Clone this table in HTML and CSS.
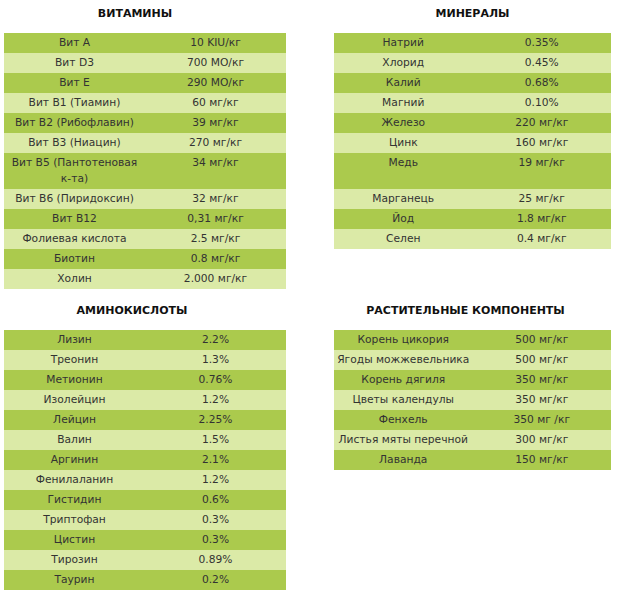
FILE: index.html
```html
<!DOCTYPE html>
<html lang="ru">
<head>
<meta charset="utf-8">
<title>Состав</title>
<link rel="stylesheet" href="styles.css">
</head>
<body>
<div class="grid">
  <section class="sec">
    <h2 class="title t-vit">ВИТАМИНЫ</h2>
    <table class="tbl">
      <tr><td>Вит A</td><td>10 KIU/кг</td></tr>
      <tr><td>Вит D3</td><td>700 МО/кг</td></tr>
      <tr><td>Вит E</td><td>290 МО/кг</td></tr>
      <tr><td>Вит B1 (Тиамин)</td><td>60 мг/кг</td></tr>
      <tr><td>Вит B2 (Рибофлавин)</td><td>39 мг/кг</td></tr>
      <tr><td>Вит B3 (Ниацин)</td><td>270 мг/кг</td></tr>
      <tr><td>Вит B5 (Пантотеновая к-та)</td><td>34 мг/кг</td></tr>
      <tr><td>Вит B6 (Пиридоксин)</td><td>32 мг/кг</td></tr>
      <tr><td>Вит B12</td><td>0,31 мг/кг</td></tr>
      <tr><td>Фолиевая кислота</td><td>2.5 мг/кг</td></tr>
      <tr><td>Биотин</td><td>0.8 мг/кг</td></tr>
      <tr><td>Холин</td><td>2.000 мг/кг</td></tr>
    </table>
  </section>
  <section class="sec">
    <h2 class="title t-min">МИНЕРАЛЫ</h2>
    <table class="tbl">
      <tr><td>Натрий</td><td>0.35%</td></tr>
      <tr><td>Хлорид</td><td>0.45%</td></tr>
      <tr><td>Калий</td><td>0.68%</td></tr>
      <tr><td>Магний</td><td>0.10%</td></tr>
      <tr><td>Железо</td><td>220 мг/кг</td></tr>
      <tr><td>Цинк</td><td>160 мг/кг</td></tr>
      <tr class="tall"><td>Медь</td><td>19 мг/кг</td></tr>
      <tr><td>Марганець</td><td>25 мг/кг</td></tr>
      <tr><td>Йод</td><td>1.8 мг/кг</td></tr>
      <tr><td>Селен</td><td>0.4 мг/кг</td></tr>
    </table>
  </section>
  <section class="sec">
    <h2 class="title t-amino">АМИНОКИСЛОТЫ</h2>
    <table class="tbl">
      <tr><td>Лизин</td><td>2.2%</td></tr>
      <tr><td>Треонин</td><td>1.3%</td></tr>
      <tr><td>Метионин</td><td>0.76%</td></tr>
      <tr><td>Изолейцин</td><td>1.2%</td></tr>
      <tr><td>Лейцин</td><td>2.25%</td></tr>
      <tr><td>Валин</td><td>1.5%</td></tr>
      <tr><td>Аргинин</td><td>2.1%</td></tr>
      <tr><td>Фенилаланин</td><td>1.2%</td></tr>
      <tr><td>Гистидин</td><td>0.6%</td></tr>
      <tr><td>Триптофан</td><td>0.3%</td></tr>
      <tr><td>Цистин</td><td>0.3%</td></tr>
      <tr><td>Тирозин</td><td>0.89%</td></tr>
      <tr><td>Таурин</td><td>0.2%</td></tr>
    </table>
  </section>
  <section class="sec">
    <h2 class="title t-plant">РАСТИТЕЛЬНЫЕ КОМПОНЕНТЫ</h2>
    <table class="tbl nowrap">
      <tr><td>Корень цикория</td><td>500 мг/кг</td></tr>
      <tr><td>Ягоды можжевельника</td><td>500 мг/кг</td></tr>
      <tr><td>Корень дягиля</td><td>350 мг/кг</td></tr>
      <tr><td>Цветы календулы</td><td>350 мг/кг</td></tr>
      <tr><td>Фенхель</td><td>350 мг /кг</td></tr>
      <tr><td>Листья мяты перечной</td><td>300 мг/кг</td></tr>
      <tr><td>Лаванда</td><td>150 мг/кг</td></tr>
    </table>
  </section>
</div>
</body>
</html>
```

FILE: styles.css
```css
html, body {
  margin: 0;
  padding: 0;
  background: #ffffff;
}
body {
  font-family: "DejaVu Sans", Verdana, sans-serif;
  font-size: 10.7px;
  color: #333333;
}
.grid {
  display: grid;
  grid-template-columns: 282px 277px;
  column-gap: 48px;
  row-gap: 8px;
  padding-left: 4px;
  align-items: start;
}
.title {
  margin: 7px 0 12px;
  font-size: 11px;
  line-height: 14px;
  font-weight: bold;
  color: #111111;
  text-align: center;
}
.t-vit { padding-right: 20px; }
.t-amino { padding-right: 26px; }
.t-plant { padding-right: 14px; }
.tbl {
  width: 100%;
  border-collapse: collapse;
  table-layout: fixed;
}
.tbl td {
  width: 50%;
  padding: 2px 1px;
  line-height: 16px;
  text-align: center;
  vertical-align: top;
}
.nowrap td { white-space: nowrap; }
.tbl tr:nth-child(odd) { background: #abca4d; }
.tbl tr:nth-child(even) { background: #dbeaa7; }
.tbl tr.tall td { height: 32px; }
```
